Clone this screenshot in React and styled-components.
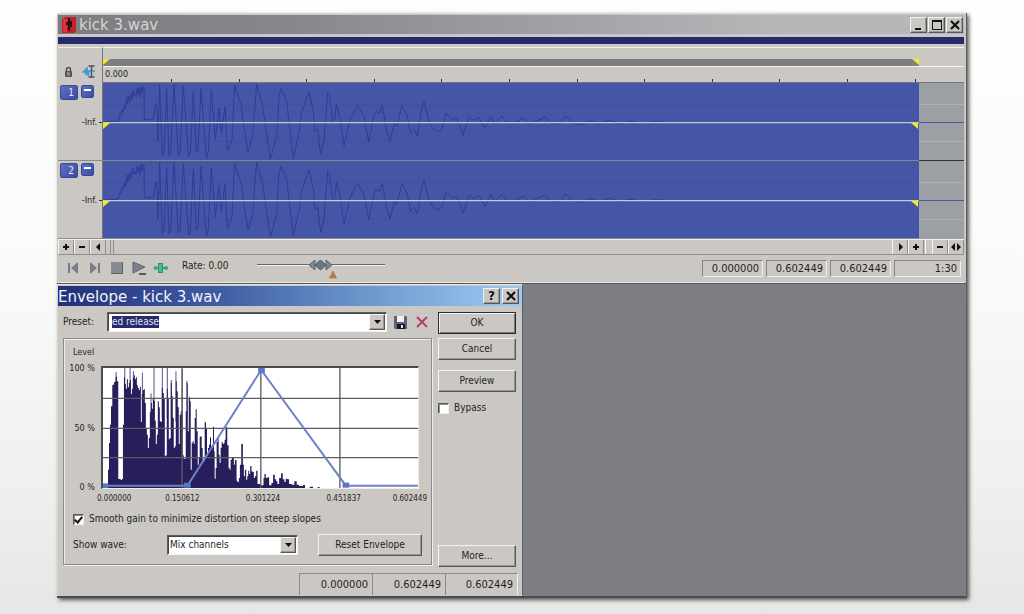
import React, { useEffect, useRef, useState } from 'react'
import styled, { createGlobalStyle, css } from 'styled-components'

const GlobalStyle = createGlobalStyle`
  * { box-sizing: border-box; }
  body {
    margin: 0;
    min-height: 100vh;
    background: linear-gradient(180deg, #fefefc 0%, #fafaf9 45%, #efefee 80%, #e6e6e5 100%);
    font-family: "DejaVu Sans Condensed", "Noto Sans", sans-serif;
    font-size: 10px;
    line-height: 12px;
    color: #1f1f22;
  }
  button, input, select { font: inherit; color: inherit; }
`

const face = '#cbc8c3'
const raised = css`
  background: ${face};
  border: 1px solid;
  border-color: #f4f3f0 #55565b #55565b #f4f3f0;
  box-shadow: inset -1px -1px 0 #98979a;
`

const Page = styled.main`
  padding: 13px 57px 16px;
`

const Desktop = styled.div`
  background: #7c7e83;
  border-right: 1px solid #5b5c60;
  border-bottom: 2px solid #4a4b4f;
  box-shadow: 2px 2px 4px rgba(0, 0, 0, 0.65);
`

const WaveWindow = styled.section`
  background: ${face};
  padding: 1px 2px 0 1px;
  border-top: 1px solid #d8d6d2;
  border-bottom: 1px solid #55565a;
`

const TitleBar = styled.header`
  display: flex;
  align-items: center;
  height: ${p => p.$height}px;
  padding: 0 ${p => p.$end}px 0 ${p => p.$start}px;
  gap: 3px;
  background: ${p => p.$fill};
  color: ${p => p.$ink};
  svg { flex: none; }
`

const Title = styled.h1`
  margin: 0;
  padding-top: 2px;
  flex: 1;
  font-family: "DejaVu Sans", sans-serif;
  font-weight: 400;
  font-size: 15px;
  line-height: 19px;
`

const CaptionButtons = styled.div`
  display: flex;
  gap: ${p => p.$gap}px;
`

const CaptionButton = styled.button`
  ${raised}
  width: 17px;
  height: 16px;
  padding: 0;
  display: grid;
  place-items: center;
  color: #111;
  font-family: "DejaVu Sans", sans-serif;
  font-weight: 700;
  font-size: 12px;
`

const Overview = styled.div`
  height: 7px;
  margin: 3px 0;
  background: #262b6d;
`

const WaveGrid = styled.div`
  display: grid;
  grid-template-columns: 45px 1fr;
`

const Tools = styled.div`
  display: flex;
  align-items: flex-end;
  gap: 9px;
  padding: 0 5px 4px 6px;
  height: 36px;
  border-top: 1px solid #efeeeb;
  border-right: 1px solid #77777a;
`

const Ruler = styled.div`
  height: 36px;
  border-top: 1px solid #f3f2ef;
  border-bottom: 1px solid #77777a;
  display: flex;
  flex-direction: column;
`

const LoopRow = styled.div`
  flex: 1;
  display: flex;
  align-items: flex-end;
  border-bottom: 1px solid #f6f5f2;
`

const LoopBar = styled.div`
  display: flex;
  justify-content: space-between;
  flex: 1;
  height: 7px;
  margin-right: 45px;
  background: #7c7e82;
`

const Marker = styled.i`
  width: 7px;
  height: 6px;
  background: #f4ec1c;
  clip-path: polygon(0 0, 100% 0, ${p => (p.$right ? '100% 100%' : '0 100%')});
`

const TimeRow = styled.div`
  height: 15px;
  display: flex;
  justify-content: space-between;
  padding-left: 2px;
  font-size: 9px;
  line-height: 14px;
  position: relative;
`

const Ticks = styled.svg`
  position: absolute;
  left: 0;
  bottom: 0;
  width: 100%;
  height: 3px;
`

const ChannelHead = styled.div`
  height: 78px;
  padding: 2px 0 0 2px;
  border-bottom: 1px solid #8b8b8b;
  border-right: 1px solid #77777a;
`

const HeadButtons = styled.div`
  display: flex;
  gap: 3px;
`

const Badge = styled.button`
  width: ${p => p.$width}px;
  height: ${p => p.$height}px;
  padding: 0 3px;
  border: 1px solid #3a4893;
  border-radius: 2px;
  background: linear-gradient(135deg, #5c71c4, #3a4ba3);
  color: #e5e9fa;
  line-height: 12px;
  text-align: right;
`

const Dash = styled.i`
  display: block;
  width: 7px;
  height: 2px;
  margin: -3px 0 0 -1px;
  background: #fff;
`

const Level = styled.div`
  margin-top: 16px;
  display: flex;
  align-items: center;
  justify-content: flex-end;
  gap: 2px;
  font-size: 9px;
  &::after { content: ""; width: 3px; height: 1px; background: #333; }
`

const Track = styled.div`
  display: grid;
  grid-template-columns: 1fr 45px;
  height: 78px;
`

const Selection = styled.div`
  position: relative;
  background: #4656a7;
  border-bottom: 1px solid #868889;
  overflow: hidden;
  svg { display: block; width: 100%; height: 78px; }
`

const Beyond = styled.div`
  background:
    linear-gradient(#3f5fa5, #3f5fa5) 0 39px / 100% 1px no-repeat,
    linear-gradient(#aeb1b5, #aeb1b5) 0 21px / 100% 1px no-repeat,
    linear-gradient(#aeb1b5, #aeb1b5) 0 58px / 100% 1px no-repeat,
    #9c9fa4;
  border-bottom: 1px solid ${p => (p.$last ? '#9c9fa4' : '#333')};
`

const EdgeMarkers = styled.div`
  position: absolute;
  top: 40px;
  left: 0;
  right: 1px;
  display: flex;
  justify-content: space-between;
`

const ScrollRow = styled.div`
  display: flex;
  height: 16px;
  border-top: 1px solid #f4f3f0;
  border-bottom: 1px solid #8f8e8d;
`

const ScrollButton = styled.button`
  width: 16px;
  padding: 0;
  display: grid;
  place-items: center;
  background: ${face};
  border: 0;
  border-left: 1px solid #f6f5f2;
  border-right: 1px solid #8f8e8d;
  color: #111;
`

const ScrollTrack = styled.div`
  flex: 1;
  margin-left: 4px;
  border-left: 4px double #908f8e;
`

const Gap = styled.div`
  width: 7px;
  margin-left: 1px;
  border-left: 1px solid #f6f5f2;
`

const Transport = styled.div`
  display: flex;
  align-items: flex-start;
  height: 28px;
  padding: 5px 3px 0 7px;
  border-bottom: 1px solid #eceae7;
`

const TransportButtons = styled.div`
  display: flex;
  gap: 6px;
`

const ToolButton = styled.button`
  border: 0;
  padding: 0;
  background: none;
  display: grid;
  place-items: center;
  width: 16px;
  height: 16px;
`

const RateLabel = styled.label`
  margin-left: 13px;
  width: 75px;
  line-height: 11px;
`

const RateSlider = styled.div`
  position: relative;
  width: 128px;
  height: 20px;
  svg { position: absolute; left: 50px; top: 0; pointer-events: none; }
`

const Range = styled.input`
  appearance: none;
  display: block;
  width: 100%;
  height: 10px;
  margin: 0;
  background: linear-gradient(#66686d, #66686d) 0 4px / 100% 1px no-repeat,
    linear-gradient(#f2f1ee, #f2f1ee) 0 5px / 100% 1px no-repeat;
  &::-webkit-slider-thumb { appearance: none; width: 22px; height: 10px; background: transparent; }
`

const Readouts = styled.div`
  margin-left: auto;
  display: flex;
  gap: 3px;
`

const Readout = styled.output`
  width: ${p => p.$width}px;
  height: 17px;
  padding: 0 3px;
  font-size: 11px;
  line-height: 16px;
  text-align: right;
  border: 1px solid;
  border-color: #858589 #f0efec #f0efec #858589;
`

const Dialog = styled.section`
  width: 466px;
  background: ${face};
  border: 1px solid;
  border-color: #e8e6e2 #5d5e62 transparent #d7d5d1;
  padding-top: 1px;
`

const DialogBody = styled.form`
  display: grid;
  grid-template-columns: 1fr 78px;
  gap: 6px;
  padding: 6px 6px 6px 5px;
`

const Column = styled.div`
  display: flex;
  flex-direction: column;
  padding-bottom: ${p => p.$end || 0}px;
`

const PresetRow = styled.div`
  display: flex;
  align-items: center;
  height: 20px;
  margin-bottom: 6px;
  label { width: 44px; }
`

const Well = styled.div`
  display: flex;
  position: relative;
  height: 20px;
  width: ${p => (p.$width ? `${p.$width}px` : 'auto')};
  flex: ${p => (p.$width ? 'none' : 1)};
  background: #fff;
  border: 1px solid;
  border-color: #5b5c61 #f4f3f0 #f4f3f0 #5b5c61;
  box-shadow: inset 1px 1px 0 #45464a;
`

const PresetInput = styled.input`
  flex: 1;
  min-width: 0;
  border: 0;
  outline: 0;
  padding: 0 4px;
  background: transparent;
  &::selection { background: #262b6d; color: #dfe3f6; }
`

const WellSelect = styled.select`
  flex: 1;
  min-width: 0;
  appearance: none;
  border: 0;
  outline: 0;
  padding: 0 2px;
  background: transparent;
`

const Arrow = styled.span`
  ${raised}
  display: grid;
  place-items: center;
  width: 16px;
  margin: 1px 1px 1px 0;
  pointer-events: none;
`

const PresetTools = styled.div`
  display: flex;
  gap: 6px;
  margin: 0 2px 0 5px;
`

const Group = styled.fieldset`
  margin: 0;
  height: 227px;
  min-width: 0;
  padding: 7px 9px 0;
  border: 1px solid #8b8b8f;
  box-shadow: inset 1px 1px 0 #efeeeb, 1px 1px 0 #efeeeb;
`

const ChartTitle = styled.div`
  font-size: 9px;
  height: 20px;
`

const ChartArea = styled.div`
  display: grid;
  grid-template-columns: 25px 1fr;
  column-gap: 6px;
  margin: 0 3px 0 -3px;
`

const YAxis = styled.div`
  display: flex;
  flex-direction: column;
  justify-content: space-between;
  align-items: flex-end;
  margin: -4px 0;
  font-size: 9px;
  line-height: 12px;
  white-space: nowrap;
`

const Plot = styled.div`
  border: 1px solid;
  border-width: 2px 1px 1px 2px;
  border-color: #4a4b4f #efeeeb #efeeeb #4a4b4f;
  background: #fff;
  svg { display: block; width: 100%; height: 120px; }
`

const XAxis = styled.div`
  display: grid;
  grid-template-columns: 45px 1fr 1fr 1fr 43px;
  margin: 4px -5px 0 24px;
  font-size: 8px;
  text-align: center;
  span:first-child { text-align: left; }
  span:last-child { text-align: right; }
`

const Check = styled.label`
  display: flex;
  align-items: center;
  gap: 5px;
  margin-top: ${p => p.$top}px;
`

const Box = styled.input`
  appearance: none;
  flex: none;
  display: grid;
  place-items: center;
  width: 11px;
  height: 11px;
  margin: 0;
  background: #fff;
  border: 1px solid;
  border-color: #55565b #efeeeb #efeeeb #55565b;
  box-shadow: inset 1px 1px 0 #8d8d90;
  &:checked::after {
    content: "";
    width: 3px;
    height: 6px;
    border: solid #111;
    border-width: 0 2px 2px 0;
    transform: rotate(40deg);
  }
`

const ShowRow = styled.div`
  display: flex;
  align-items: center;
  margin-top: 9px;
  label { width: 94px; }
`

const Button = styled.button`
  ${raised}
  width: ${p => (p.$width ? `${p.$width}px` : '100%')};
  height: 22px;
  padding: 0;
  margin-top: ${p => p.$top || 0}px;
  margin-left: ${p => (p.$push ? 'auto' : 0)};
  ${p => p.$primary && css`
    border-color: #2b2c30;
    box-shadow: inset 1px 1px 0 #f4f3f0, inset -1px -1px 0 #77777b;
  `}
`

const Bottom = styled.div`
  margin-top: auto;
`

const StatusBar = styled.footer`
  display: flex;
  justify-content: flex-end;
  padding-right: 4px;
  output {
    width: 73px;
    height: 22px;
    padding: 0 4px;
    font-size: 11px;
    line-height: 21px;
    text-align: right;
    border-top: 1px solid #8b8b8f;
    border-left: 1px solid #8b8b8f;
  }
  output:last-child { border-right: 1px solid #f0efec; }
`

// one channel, in a 2448 x 234 space
const wave =
  'M0 118 L46 114 51 94 53 100 57 79 59 88 65 67 67 78 71 41 73 64 77 39 79 60 83 34 86 52 89 21 91 40 95 29 99 42 103 14 105 34 109 17 112 42 115 9 117 30 120 11 123 14 124 109 151 109 158 61 162 79 165 174 170 4 178 219 183 209 191 19 198 219 203 211 213 4 226 217 231 211 241 9 257 221 262 214 271 24 280 207 285 201 294 17 310 227 316 204 325 21 337 169 348 74 355 151 366 71 373 204 387 169 395 7 415 69 421 119 435 207 449 159 461 4 478 64 486 119 502 229 521 159 528 39 534 17 551 54 556 99 571 226 589 144 596 89 618 26 631 84 636 144 644 139 653 214 663 174 674 29 679 34 689 114 695 109 700 64 711 104 723 189 741 109 764 67 783 99 797 176 813 99 821 84 828 92 838 67 851 144 861 174 874 119 881 132 897 67 913 99 923 152 933 139 943 159 956 79 963 56 979 119 991 139 1006 146 1016 139 1029 91 1046 109 1061 106 1071 129 1080 157 1098 102 1111 112 1126 102 1146 136 1163 101 1176 122 1196 99 1211 118 1241 118 1261 104 1281 124 1296 116 1326 102 1346 122 1373 119 1389 99 1406 118 1436 126 1454 113 1490 120 1520 112 1550 122 1580 115 1620 120 1660 116 1700 119 1770 118'

// mixed-down sample levels as [x, top] steps in a 948 x 360 space
const levels = [
  [15, 305], [18, 225], [21, 170], [24, 115], [28, 50], [33, 42], [38, 26], [42, 40], [46, 333], [53, 336], [57, 333],
  [60, 170], [63, 28], [66, 48], [69, 62], [72, 34], [75, 58], [78, 45], [81, 36], [84, 78], [87, 62], [90, 30], [93, 22],
  [96, 34], [99, 28], [102, 52], [105, 60], [108, 66], [111, 56], [114, 162], [117, 78], [120, 66], [123, 64], [126, 105],
  [129, 182], [132, 200], [135, 240], [138, 210], [141, 132], [144, 105], [147, 122], [150, 92], [153, 98], [156, 158],
  [159, 228], [162, 200], [165, 100], [168, 118], [171, 160], [174, 162], [177, 60], [180, 75], [183, 92], [186, 265],
  [189, 262], [192, 62], [195, 90], [198, 214], [201, 210], [204, 45], [207, 85], [210, 150], [213, 240], [216, 235],
  [219, 40], [222, 70], [225, 118], [228, 228], [231, 140], [234, 130], [237, 140], [240, 262], [243, 272], [246, 272],
  [249, 130], [252, 45], [255, 190], [258, 90], [261, 100], [264, 305], [267, 224], [270, 220], [273, 228], [276, 150],
  [279, 124], [282, 190], [285, 290], [288, 268], [291, 206], [294, 205], [297, 240], [300, 280], [303, 280], [306, 163],
  [310, 180], [313, 258], [316, 240], [319, 230], [322, 208], [325, 238], [328, 230], [331, 176], [334, 250], [336, 332],
  [339, 300], [342, 222], [345, 206], [348, 260], [351, 285], [354, 240], [357, 222], [360, 228], [363, 225], [366, 215],
  [369, 178], [374, 232], [378, 300], [381, 305], [384, 275], [388, 270], [394, 290], [397, 276], [402, 338], [405, 342],
  [409, 330], [412, 290], [416, 228], [421, 290], [424, 325], [427, 305], [431, 335], [434, 325], [437, 308], [440, 318],
  [443, 294], [447, 310], [450, 312], [454, 330], [457, 325], [461, 308], [465, 348], [474, 352], [483, 330], [486, 318],
  [490, 330], [495, 328], [500, 352], [507, 345], [512, 320], [517, 334], [521, 340], [525, 348], [530, 330], [536, 316],
  [541, 334], [546, 342], [550, 332], [555, 334], [560, 348], [568, 350], [576, 340], [583, 350], [590, 354], [602, 351],
  [608, 360], [622, 356], [632, 360], [646, 357], [652, 360],
]

const peaks = [[39, 12], [65, 0], [81, 0], [91, 10], [118, 14], [144, 76], [153, 0], [178, 0], [193, 0], [205, 36], [219, 10], [238, 4], [252, 38], [260, 86]]

const levelPath = 'M12 360' + levels.map(([x, y]) => ` H${x} V${y}`).join('') + ' V360 Z'

const handles = [[6, 354], [254, 352], [477, 8], [731, 352]]

function Channel({ number, last }) {
  return (
    <>
      <ChannelHead>
        <HeadButtons>
          <Badge type="button" $width={18} $height={15}>{number}</Badge>
          <Badge type="button" $width={13} $height={13} aria-label="Minimize channel"><Dash /></Badge>
        </HeadButtons>
        <Level>-Inf.</Level>
      </ChannelHead>
      <Track>
        <Selection>
          <svg viewBox="0 0 2448 234" preserveAspectRatio="none">
            <path d="M0 64H2448M0 175H2448" stroke="#4050a0" strokeWidth="3" />
            <path d={wave} fill="none" stroke="#2f3b9b" strokeWidth="1" vectorEffect="non-scaling-stroke" />
            <path d="M0 119H2448" stroke="#c9cbc9" strokeWidth="4" />
          </svg>
          <EdgeMarkers><Marker /><Marker $right /></EdgeMarkers>
        </Selection>
        <Beyond $last={last} />
      </Track>
    </>
  )
}

function DownArrow() {
  return <Arrow><svg width="7" height="4"><path d="M0 0H7L3.5 4Z" fill="#111" /></svg></Arrow>
}

function Glyph({ d }) {
  return <svg width="10" height="10" viewBox="0 0 10 10"><path d={d} fill="#111" /></svg>
}

function CloseGlyph() {
  return <svg width="10" height="10" viewBox="0 0 10 10"><path d="M1 1L9 9M9 1L1 9" stroke="#111" strokeWidth="2.2" /></svg>
}

function EnvelopeChart() {
  return (
    <ChartArea>
      <YAxis><span>100 %</span><span>50 %</span><span>0 %</span></YAxis>
      <Plot>
        <svg viewBox="0 0 948 360" preserveAspectRatio="none">
          {peaks.map(([x, y]) => <rect key={x} x={x - 1} y={y} width="3" height="150" fill="#5b5489" />)}
          <path d={levelPath} fill="#261f5c" />
          <path d="M0 91H948M0 181H948M0 269H948M238 0V360M475 0V360M713 0V360" stroke="#5c5b60" strokeWidth="4" />
          <path d="M0 353H254L476 6 731 353H948" fill="none" stroke="#6f81cb" strokeWidth="6" />
          {handles.map(([x, y]) => <rect key={x} x={x - 10} y={y - 8} width="20" height="15" fill="#5b76c6" />)}
        </svg>
      </Plot>
    </ChartArea>
  )
}

export default function App() {
  const [preset, setPreset] = useState('ed release')
  const [rate, setRate] = useState(0)
  const presetRef = useRef(null)

  useEffect(() => {
    presetRef.current.focus()
    presetRef.current.select()
  }, [])

  return (
    <Page>
      <GlobalStyle />
      <Desktop>
        <WaveWindow>
          <TitleBar $height={19} $start={4} $end={1} $fill="linear-gradient(90deg, #7b7d81 0%, #85878b 25%, #b5b7b9 80%)" $ink="#d6d4cf">
            <svg width="14" height="16" viewBox="0 0 14 16">
              <path d="M0 2L3 0H14V14L12 16H0Z" fill="#c3202b" />
              <path d="M1 2H5V15H1Z" fill="#e8323a" />
              <path d="M6 1H8V4H10V10H8V15L5 11H6V8H4V5H6Z" fill="#2c1014" />
            </svg>
            <Title>kick 3.wav</Title>
            <CaptionButtons $gap={1}>
              <CaptionButton type="button" aria-label="Minimize"><Glyph d="M1 8H7V10H1Z" /></CaptionButton>
              <CaptionButton type="button" aria-label="Maximize"><Glyph d="M0 0H10V10H0ZM1 2V9H9V2Z" /></CaptionButton>
              <CaptionButton type="button" aria-label="Close"><CloseGlyph /></CaptionButton>
            </CaptionButtons>
          </TitleBar>
          <Overview />
          <WaveGrid>
            <Tools>
              <svg width="9" height="13" viewBox="0 0 9 13">
                <path d="M2.500 5V3.500a2 2 0 0 1 4 0V5" fill="none" stroke="#4d4f55" strokeWidth="1.500" />
                <rect x="1" y="5" width="7" height="6" rx="1" fill="#54565c" />
                <path d="M3 7H6M3 9H6" stroke="#b7b8bb" />
              </svg>
              <svg width="14" height="14" viewBox="0 0 14 14">
                <path d="M0 7H2L3 5 4 10 5 2 6 11 7 6H13" fill="none" stroke="#3f9ad6" strokeWidth="1.500" />
                <path d="M6.500 1H12.500M9.500 1V12M6.500 12H12.500" stroke="#4c525c" strokeWidth="1.500" />
              </svg>
            </Tools>
            <Ruler>
              <LoopRow>
                <LoopBar><Marker /><Marker $right /></LoopBar>
              </LoopRow>
              <TimeRow>
                <span>0.000</span>
                <Ticks viewBox="0 0 861 3" preserveAspectRatio="none">
                  {Array.from({ length: 12 }, (_, i) => (
                    <rect key={i} x={Math.round(68 + i * 67.6)} y="0" width="1" height="3" fill="#333" />
                  ))}
                </Ticks>
              </TimeRow>
            </Ruler>
            <Channel number={1} />
            <Channel number={2} last />
          </WaveGrid>
          <ScrollRow>
            <ScrollButton type="button" aria-label="Zoom in"><Glyph d="M4 2H6V4H8V6H6V8H4V6H2V4H4Z" /></ScrollButton>
            <ScrollButton type="button" aria-label="Zoom out"><Glyph d="M2 4H8V6H2Z" /></ScrollButton>
            <ScrollButton type="button" aria-label="Scroll left"><Glyph d="M7 1V9L3 5Z" /></ScrollButton>
            <ScrollTrack />
            <ScrollButton type="button" aria-label="Scroll right"><Glyph d="M4 1V9L8 5Z" /></ScrollButton>
            <ScrollButton type="button" aria-label="Zoom in time"><Glyph d="M4 2H6V4H8V6H6V8H4V6H2V4H4Z" /></ScrollButton>
            <Gap />
            <ScrollButton type="button" aria-label="Zoom out time"><Glyph d="M2 4H8V6H2Z" /></ScrollButton>
            <ScrollButton type="button" aria-label="Fit"><Glyph d="M4 1V9L0 5ZM6 1V9L10 5Z" /></ScrollButton>
          </ScrollRow>
          <Transport>
            <TransportButtons>
              <ToolButton type="button" aria-label="Go to start">
                <svg width="12" height="12" viewBox="0 0 12 12"><path d="M1 1H3V11H1ZM11 0V12L4 6Z" fill="#777c87" /></svg>
              </ToolButton>
              <ToolButton type="button" aria-label="Go to end">
                <svg width="12" height="12" viewBox="0 0 12 12"><path d="M9 1H11V11H9ZM1 0V12L8 6Z" fill="#777c87" /></svg>
              </ToolButton>
              <ToolButton type="button" aria-label="Stop">
                <svg width="12" height="12"><rect width="12" height="12" fill="#858a94" /><path d="M11.500 0V11.500H0" fill="none" stroke="#5c6069" /></svg>
              </ToolButton>
              <ToolButton type="button" aria-label="Play">
                <svg width="14" height="14" viewBox="0 0 14 14"><path d="M1 1V12L13 6Z" fill="#7c818d" stroke="#60646e" /><path d="M7 13H14" stroke="#555961" strokeWidth="2" /></svg>
              </ToolButton>
              <ToolButton type="button" aria-label="Scrub">
                <svg width="16" height="10" viewBox="0 0 16 10"><path d="M1 5H15" stroke="#3f8f7a" strokeWidth="2" /><rect x="5.500" y="0.500" width="4" height="9" fill="#45bf98" stroke="#2f8f74" /><circle cx="2.500" cy="5" r="2" fill="#3fa98a" /><circle cx="13" cy="5" r="2" fill="#3fa98a" /></svg>
              </ToolButton>
            </TransportButtons>
            <RateLabel htmlFor="rate">Rate: {rate.toFixed(2)}</RateLabel>
            <RateSlider>
              <Range id="rate" type="range" min="-1" max="1" step="0.01" value={rate} onChange={e => setRate(Number(e.target.value))} />
              <svg width="30" height="20" viewBox="0 0 30 20">
                <path d="M8 0V10L2 5ZM19 0V10L25 5Z" fill="#7d8794" stroke="#5b6470" />
                <path d="M13.500 0L19 5 13.500 10 8 5Z" fill="#6b7583" stroke="#4f5762" />
                <path d="M26 11L29.500 18H22.500Z" fill="#c17a38" stroke="#8a6a4c" strokeWidth="0.500" />
              </svg>
            </RateSlider>
            <Readouts>
              <Readout $width={61}>0.000000</Readout>
              <Readout $width={61}>0.602449</Readout>
              <Readout $width={61}>0.602449</Readout>
              <Readout $width={67}>1:30</Readout>
            </Readouts>
          </Transport>
        </WaveWindow>

        <Dialog>
          <TitleBar $height={20} $start={0} $end={3} $fill="linear-gradient(90deg, #22307a 0%, #3f5da4 35%, #6f9acf 68%, #9ccbf3 100%)" $ink="#f3f5fb">
            <Title as="h2">Envelope - kick 3.wav</Title>
            <CaptionButtons $gap={2}>
              <CaptionButton type="button" aria-label="Help">?</CaptionButton>
              <CaptionButton type="button" aria-label="Close"><CloseGlyph /></CaptionButton>
            </CaptionButtons>
          </TitleBar>
          <DialogBody onSubmit={e => e.preventDefault()}>
            <Column $end={2}>
              <PresetRow>
                <label htmlFor="preset">Preset:</label>
                <Well>
                  <PresetInput id="preset" ref={presetRef} value={preset} onChange={e => setPreset(e.target.value)} />
                  <DownArrow />
                </Well>
                <PresetTools>
                  <ToolButton type="button" aria-label="Save preset">
                    <svg width="13" height="13" viewBox="0 0 13 13"><path d="M0 0H12L13 1V13H1L0 12Z" fill="#5b6473" /><rect x="3" y="0" width="7" height="6" fill="#eef0f3" /><rect x="3" y="8" width="8" height="5" fill="#15171b" /><rect x="7" y="9" width="2" height="3" fill="#e6e8ec" /></svg>
                  </ToolButton>
                  <ToolButton type="button" aria-label="Delete preset">
                    <svg width="12" height="12" viewBox="0 0 12 12"><path d="M1 1L11 11M11 1L1 11" stroke="#ad4660" strokeWidth="2" /></svg>
                  </ToolButton>
                </PresetTools>
              </PresetRow>
              <Group>
                <ChartTitle>Level</ChartTitle>
                <EnvelopeChart />
                <XAxis>
                  <span>0.000000</span><span>0.150612</span><span>0.301224</span><span>0.451837</span><span>0.602449</span>
                </XAxis>
                <Check $top={8}>
                  <Box type="checkbox" defaultChecked />
                  Smooth gain to minimize distortion on steep slopes
                </Check>
                <ShowRow>
                  <label htmlFor="show">Show wave:</label>
                  <Well $width={131}>
                    <WellSelect id="show"><option>Mix channels</option></WellSelect>
                    <DownArrow />
                  </Well>
                  <Button type="button" $width={104} $push>Reset Envelope</Button>
                </ShowRow>
              </Group>
            </Column>
            <Column>
              <Button type="submit" $primary>OK</Button>
              <Button type="button" $top={4}>Cancel</Button>
              <Button type="button" $top={10}>Preview</Button>
              <Check $top={10}><Box type="checkbox" />Bypass</Check>
              <Bottom><Button type="button">More...</Button></Bottom>
            </Column>
          </DialogBody>
          <StatusBar>
            <output>0.000000</output>
            <output>0.602449</output>
            <output>0.602449</output>
          </StatusBar>
        </Dialog>
      </Desktop>
    </Page>
  )
}
